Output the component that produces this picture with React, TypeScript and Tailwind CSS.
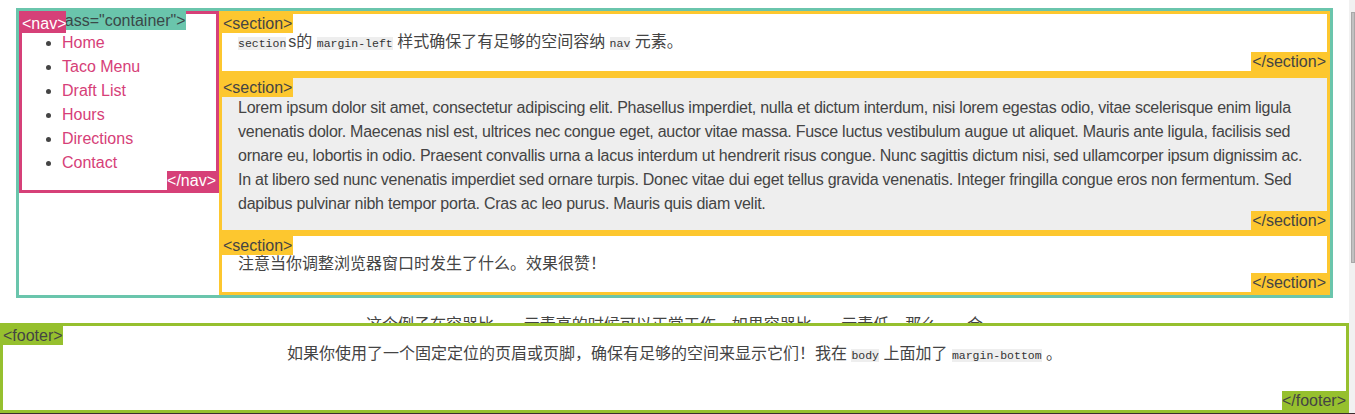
import React from "react";

const FONT = { fontFamily: '"Liberation Sans", Arial, "Noto Sans CJK SC", sans-serif' };
const MONO = { fontFamily: '"Liberation Mono", "Courier New", monospace' };

function Code({ children, plain }: { children: React.ReactNode; plain?: boolean }) {
  return (
    <code className={(plain ? "" : "bg-[#eeeeee] ") + "text-[11.5px] text-[#333]"} style={MONO}>
      {children}
    </code>
  );
}

function SecLabel({ close }: { close?: boolean }) {
  return (
    <span
      className={
        "absolute z-10 bg-[#fdc72f] px-px text-[16px] leading-[19px] text-[#444] " +
        (close ? "right-0 bottom-0" : "left-0 top-0")
      }
    >
      {close ? "</section>" : "<section>"}
    </span>
  );
}

const navItems = ["Home", "Taco Menu", "Draft List", "Hours", "Directions", "Contact"];

const lorem =
  "Lorem ipsum dolor sit amet, consectetur adipiscing elit. Phasellus imperdiet, nulla et dictum interdum, nisi lorem egestas odio, vitae scelerisque enim ligula venenatis dolor. Maecenas nisl est, ultrices nec congue eget, auctor vitae massa. Fusce luctus vestibulum augue ut aliquet. Mauris ante ligula, facilisis sed ornare eu, lobortis in odio. Praesent convallis urna a lacus interdum ut hendrerit risus congue. Nunc sagittis dictum nisi, sed ullamcorper ipsum dignissim ac. In at libero sed nunc venenatis imperdiet sed ornare turpis. Donec vitae dui eget tellus gravida venenatis. Integer fringilla congue eros non fermentum. Sed dapibus pulvinar nibh tempor porta. Cras ac leo purus. Mauris quis diam velit.";

export default function App() {
  return (
    <div
      className="relative flex h-[414px] w-[1355px] overflow-hidden bg-white text-[16px] leading-6 text-[#444]"
      style={FONT}
    >
      <div className="relative w-[1349px] shrink-0">
        {/* container */}
        <div className="relative mx-4 mt-2 flex h-[290px] border-[3px] border-[#6ac5ac]">
          <span className="absolute left-0 top-0 z-10 bg-[#6ac5ac] text-[16px] leading-[19px] text-[#3a4848]">
            {'<div class="container">'}
          </span>

          {/* nav */}
          <nav className="relative w-[200px] shrink-0 self-start border-[3px] border-[#d64078] pt-[17px] pb-[15px]">
            <span className="absolute -left-[3px] -top-[3px] z-20 bg-[#d64078] pl-[3px] pt-[3px] text-[16px] leading-[19px] text-white">
              {"<nav>"}
            </span>
            <ul className="list-disc pl-10">
              {navItems.map((n) => (
                <li key={n} className="h-6 leading-6 marker:text-[#444]">
                  <a className="text-[#d64078]">{n}</a>
                </li>
              ))}
            </ul>
            <span className="absolute bottom-0 right-0 z-20 bg-[#d64078] text-[16px] leading-[19px] text-white">
              {"</nav>"}
            </span>
          </nav>

          {/* sections */}
          <div className="flex min-w-0 flex-1 flex-col">
            <section className="relative h-[63px] border-[3px] border-[#fdc72f] bg-white px-4 pt-4 pb-[17px]">
              <SecLabel />
              <p className="h-6">
                <Code>section</Code>
                <span className="ml-[2px]">s的 </span>
                <Code>margin-left</Code> 样式确保了有足够的空间容纳 <Code>nav</Code> 元素。
              </p>
              <SecLabel close />
            </section>
            <section className="relative h-[159px] border-[3px] border-t-4 border-[#fdc72f] bg-[#eeeeee] px-4 pt-[18px] pb-[14px]">
              <SecLabel />
              <p className="tracking-[-0.26px]">{lorem}</p>
              <SecLabel close />
            </section>
            <section className="relative h-[62px] border-[3px] border-[#fdc72f] bg-white px-4 pt-4 pb-4">
              <SecLabel />
              <p className="h-6">注意当你调整浏览器窗口时发生了什么。效果很赞！</p>
              <SecLabel close />
            </section>
          </div>
        </div>

        <p className="mt-[15px] h-6 text-center">
          这个例子在容器比 <Code plain>nav</Code> 元素高的时候可以正常工作。如果容器比 <Code plain>nav</Code> 元素低，那么 <Code plain>nav</Code> 会
        </p>

        {/* footer (fixed overlay) */}
        <footer className="absolute bottom-px left-0 right-0 z-30 h-[90px] border-[3px] border-[#96c02e] bg-white pt-4 text-center">
          <span className="absolute left-0 top-0 bg-[#96c02e] text-[16px] leading-[19px] text-[#444]">
            {"<footer>"}
          </span>
          <p className="h-6">
            如果你使用了一个固定定位的页眉或页脚，确保有足够的空间来显示它们！我在 <Code>body</Code> 上面加了 <Code>margin-bottom</Code> 。
          </p>
          <span className="absolute bottom-0 right-0 bg-[#96c02e] text-[16px] leading-[19px] text-[#444]">
            {"</footer>"}
          </span>
        </footer>
      </div>

      {/* scrollbar */}
      <div className="relative w-[6px] shrink-0 bg-[#f1f1f1]">
        <div className="absolute left-[2px] right-0 top-[12px] h-[251px] border border-[#a8a8a8] bg-[#c1c1c1]" />
      </div>

      <div className="absolute bottom-0 left-0 right-0 h-px bg-[#3b2d2d]" />
    </div>
  );
}
